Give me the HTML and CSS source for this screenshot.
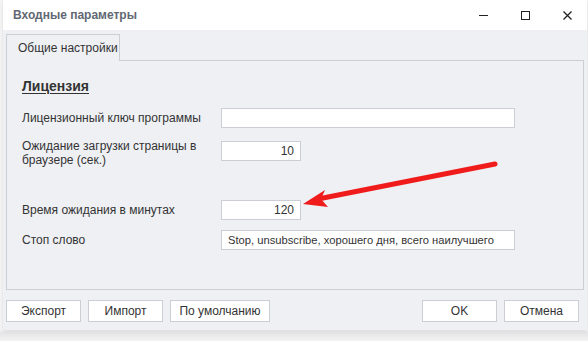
FILE: index.html
```html
<!DOCTYPE html>
<html lang="ru">

<head>
    <meta charset="UTF-8">
    <title>Входные параметры</title>
    <link rel="stylesheet" href="styles.css">
</head>

<body>
    <div class="dialog">
        <div class="titlebar">
            <span class="title">Входные параметры</span>
            <div class="controls">
                <span class="ctl ctl-min"></span>
                <span class="ctl ctl-max"></span>
                <svg class="ctl-close" width="9" height="9" viewBox="0 0 9 9">
                    <path d="M0.5 0.5 L8.5 8.5 M8.5 0.5 L0.5 8.5" stroke="#222" stroke-width="1.3" fill="none" />
                </svg>
            </div>
        </div>

        <div class="content">
            <div class="tabs">
                <div class="tab active">Общие настройки</div>
            </div>

            <div class="panel">
                <h2 class="section">Лицензия</h2>

                <div class="row">
                    <label class="label">Лицензионный ключ программы</label>
                    <div class="field wide"></div>
                </div>

                <div class="row row-2line">
                    <label class="label">Ожидание загрузки страницы в браузере (сек.)</label>
                    <div class="field short num">10</div>
                </div>

                <div class="row row-far">
                    <label class="label">Время ожидания в минутах</label>
                    <div class="field short num">120</div>
                </div>

                <div class="row">
                    <label class="label">Стоп слово</label>
                    <div class="field wide compact">Stop, unsubscribe, хорошего дня, всего наилучшего</div>
                </div>
            </div>

            <div class="buttons">
                <div class="btn-group">
                    <button class="btn">Экспорт</button>
                    <button class="btn">Импорт</button>
                    <button class="btn btn-wide">По умолчанию</button>
                </div>
                <div class="btn-group">
                    <button class="btn">OK</button>
                    <button class="btn">Отмена</button>
                </div>
            </div>
        </div>
    </div>

    <!-- annotation arrow drawn over the dialog -->
    <svg class="arrow" width="588" height="341" viewBox="0 0 588 341">
        <line x1="495" y1="164" x2="318" y2="199" stroke="#f01c1c" stroke-width="5" stroke-linecap="round" />
        <polygon points="303,204 325,190 321,199 328,207" fill="#f01c1c" />
    </svg>
</body>

</html>
```

FILE: styles.css
```css
body {
    margin: 0;
    padding: 0;
    position: relative;
    width: 588px;
    height: 341px;
    overflow: hidden;
    font-family: "Liberation Sans", Arial, sans-serif;
    font-size: 12px;
    color: #333;
    background: linear-gradient(to bottom, #f6f6f7 0, #f6f6f7 330px, #e6e6e8 333px, #f2f2f3 341px);
}

.dialog {
    width: 584px;
    height: 330px;
    margin-left: 3px;
    background: #eff0f4;
    box-shadow: 0 1px 4px rgba(0, 0, 0, 0.12);
    display: flex;
    flex-direction: column;
}

.titlebar {
    height: 30px;
    background: #ffffff;
    display: flex;
    align-items: center;
    justify-content: space-between;
}

.title {
    padding-left: 10px;
    font-weight: 700;
    font-size: 12px;
    color: #616873;
}

.controls {
    display: flex;
    align-items: center;
    gap: 33px;
    padding-right: 15px;
}

.ctl {
    display: block;
}

.ctl-min {
    width: 9px;
    height: 1px;
    background: #222;
}

.ctl-max {
    width: 7px;
    height: 7px;
    border: 1px solid #222;
}

.ctl-close {
    display: block;
}

.content {
    flex: 1;
    padding: 4px 3px 0;
    display: flex;
    flex-direction: column;
}

.tabs {
    display: flex;
    height: 26px;
}

.tab {
    width: 114px;
    height: 27px;
    box-sizing: border-box;
    border: 1px solid #cbced4;
    border-bottom: none;
    background: #eff0f4;
    line-height: 27px;
    padding-left: 11px;
    white-space: nowrap;
    position: relative;
    z-index: 1;
    margin-bottom: -1px;
}

.panel {
    height: 230px;
    box-sizing: border-box;
    border: 1px solid #cbced4;
    padding: 17px 0 0 15px;
}

.section {
    margin: 0;
    font-size: 14px;
    line-height: 16px;
    font-weight: 700;
    text-decoration: underline;
    text-underline-offset: 2px;
    color: #333;
}

.row {
    display: flex;
    align-items: flex-start;
    margin-top: 14px;
}

.label {
    width: 199px;
    line-height: 14px;
    padding-top: 3px;
}

.row-2line {
    margin-top: 13px;
}

.row-2line .label {
    width: 190px;
    padding-right: 9px;
    padding-top: 0;
    margin-top: -2px;
}

.row-far {
    margin-top: 33px;
}

.row + .row:last-child {
    margin-top: 10px;
}

.field {
    height: 20px;
    box-sizing: border-box;
    background: #fff;
    border: 1px solid #cbced4;
    line-height: 18px;
    padding: 0 6px;
    white-space: nowrap;
    overflow: hidden;
}

.compact {
    font-size: 11.2px;
}

.wide {
    width: 294px;
}

.short {
    width: 80px;
}

.num {
    text-align: right;
}

.buttons {
    display: flex;
    justify-content: space-between;
    padding: 10px 5px 0 0;
}

.btn-group {
    display: flex;
    gap: 7px;
}

.btn {
    width: 75px;
    height: 22px;
    margin: 0;
    padding: 0;
    background: #fff;
    border: 1px solid #cbced4;
    font-family: "Liberation Sans", Arial, sans-serif;
    font-size: 12px;
    color: #333;
}

.btn-wide {
    width: 100px;
}

.arrow {
    position: absolute;
    left: 0;
    top: 0;
    pointer-events: none;
}
```
